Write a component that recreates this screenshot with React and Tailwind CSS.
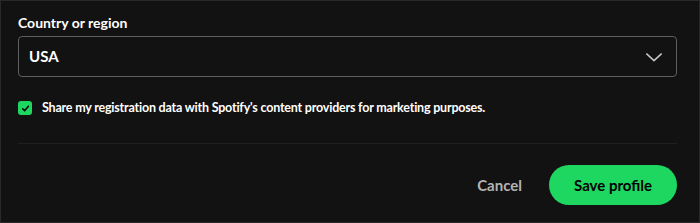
import React, { useState } from 'react';

const App = () => {
  const [country, setCountry] = useState('USA');
  const [share, setShare] = useState(true);

  return (
    <div
      className="w-[700px] h-[223px] bg-[#121212] border border-[#292929] text-white overflow-hidden"
      style={{ fontFamily: 'Lato, "Liberation Sans", sans-serif' }}
    >
      <div className="pl-[17px] pr-[22px] pt-[12px]">
        <label className="block text-[14px] font-bold leading-[20px]">Country or region</label>

        <div className="relative mt-[3px] h-[41px] rounded-[4px] border border-[#5e5e5e] bg-[#121212]">
          <div className="flex h-full items-center justify-between pl-[10px] pr-[13px]">
            <span className="text-[15px] font-bold">{country}</span>
            <svg width="18" height="18" viewBox="0 0 16 16" fill="none" className="text-[#c8c8c8]">
              <path d="M1.5 5.25 8 11.25 14.5 5.25" stroke="currentColor" strokeWidth="1.3" strokeLinecap="round" strokeLinejoin="round" />
            </svg>
          </div>
        </div>

        <label className="mt-[23px] flex items-center gap-[10px] cursor-pointer" onClick={() => setShare(!share)}>
          <span className={`flex h-[14px] w-[14px] items-center justify-center rounded-[3px] ${share ? 'bg-[#1ed760]' : 'border border-[#878787]'}`}>
            {share && (
              <svg width="9" height="9" viewBox="0 0 10 10" fill="none">
                <path d="M1.8 5.3 4 7.4 8.3 2.6" stroke="#000" strokeWidth="1.7" strokeLinecap="round" strokeLinejoin="round" />
              </svg>
            )}
          </span>
          <span className="text-[12.5px] font-bold leading-[16px] tracking-[-0.2px]">
            Share my registration data with Spotify's content providers for marketing purposes.
          </span>
        </label>

        <div className="mt-[27px] h-px bg-[#1f1f1f]"></div>

        <div className="mt-[21px] flex items-center justify-end gap-[27px]">
          <button className="text-[15px] font-bold text-[#b3b3b3]">Cancel</button>
          <button className="h-[40px] w-[128px] rounded-full bg-[#1ed760] text-[15px] font-bold text-black">
            Save profile
          </button>
        </div>
      </div>
    </div>
  );
};

export default App;
